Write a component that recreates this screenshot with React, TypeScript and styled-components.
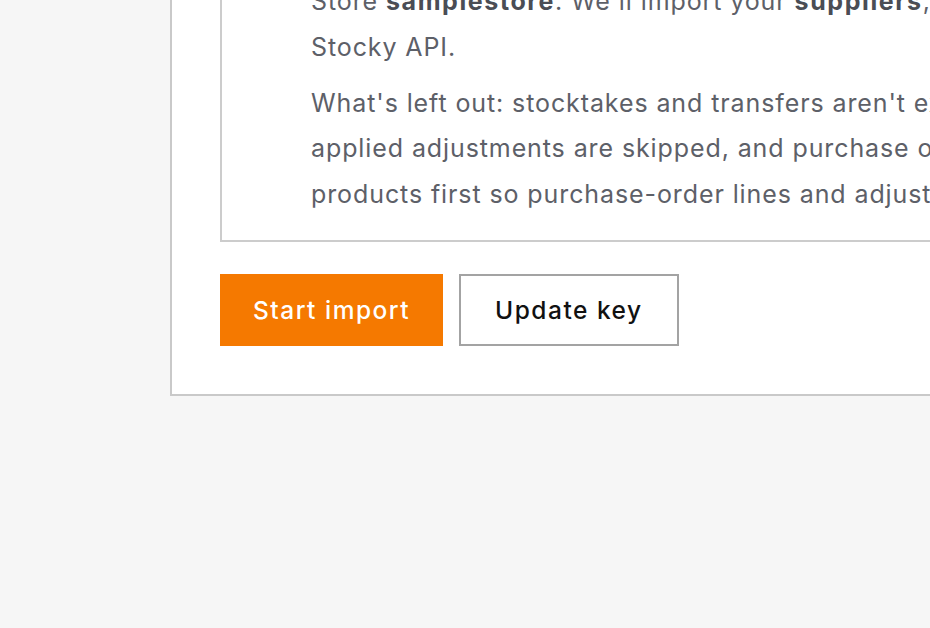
import React from "react";
import styled, { createGlobalStyle } from "styled-components";

const Global = createGlobalStyle`
  html, body {
    margin: 0;
    padding: 0;
    overflow: hidden;
    background: #f6f6f6;
  }
  body {
    font-family: Inter, "Noto Sans", "Liberation Sans", sans-serif;
    -webkit-font-smoothing: antialiased;
  }
`;

const Page = styled.div`
  padding-left: 170px;
  width: 1500px;
`;

const Card = styled.section`
  margin-top: -96px;
  width: 1200px;
  background: #ffffff;
  border: 2px solid #c9c9c9;
  padding: 48px;
`;

const Notice = styled.div`
  border: 2px solid #cccccc;
  padding: 23px 0 23px 89px;
`;

const Para = styled.p<{ $gap?: boolean }>`
  margin: ${(p) => (p.$gap ? "10.5px" : "0")} 0 0;
  font-size: 25px;
  letter-spacing: 0.9px;
  line-height: 45.5px;
  color: #5d6068;
  white-space: nowrap;

  strong {
    font-weight: 700;
    letter-spacing: 1.6px;
    color: #4a4d55;
  }
`;

const Actions = styled.div`
  display: flex;
  gap: 16px;
  margin-top: 32px;
`;

const Button = styled.button<{ $primary?: boolean }>`
  height: 72px;
  padding: 0 ${(p) => (p.$primary ? "31px" : "34px")};
  font-family: inherit;
  font-size: 24.5px;
  letter-spacing: 1.5px;
  font-weight: 500;
  border: 2px solid ${(p) => (p.$primary ? "#f57900" : "#a3a3a3")};
  background: ${(p) => (p.$primary ? "#f57900" : "#ffffff")};
  color: ${(p) => (p.$primary ? "#ffffff" : "#111111")};
  border-radius: 0;
  cursor: pointer;
`;

export default function App() {
  return (
    <>
      <Global />
      <Page>
        <Card>
          <Notice>
            <Para>
              Store <strong>samplestore</strong>. We'll import your <strong>suppliers</strong>, purchase orders and stock adjustments from the
              <br />
              Stocky API.
            </Para>
            <Para $gap>
              What's left out: stocktakes and transfers aren't exported by Stocky, so they won't come across. Un-
              <br />
              applied adjustments are skipped, and purchase orders without a supplier are ignored. Import your
              <br />
              products first so purchase-order lines and adjustments can be matched to them.
            </Para>
          </Notice>
          <Actions>
            <Button $primary>Start import</Button>
            <Button>Update key</Button>
          </Actions>
        </Card>
      </Page>
    </>
  );
}
